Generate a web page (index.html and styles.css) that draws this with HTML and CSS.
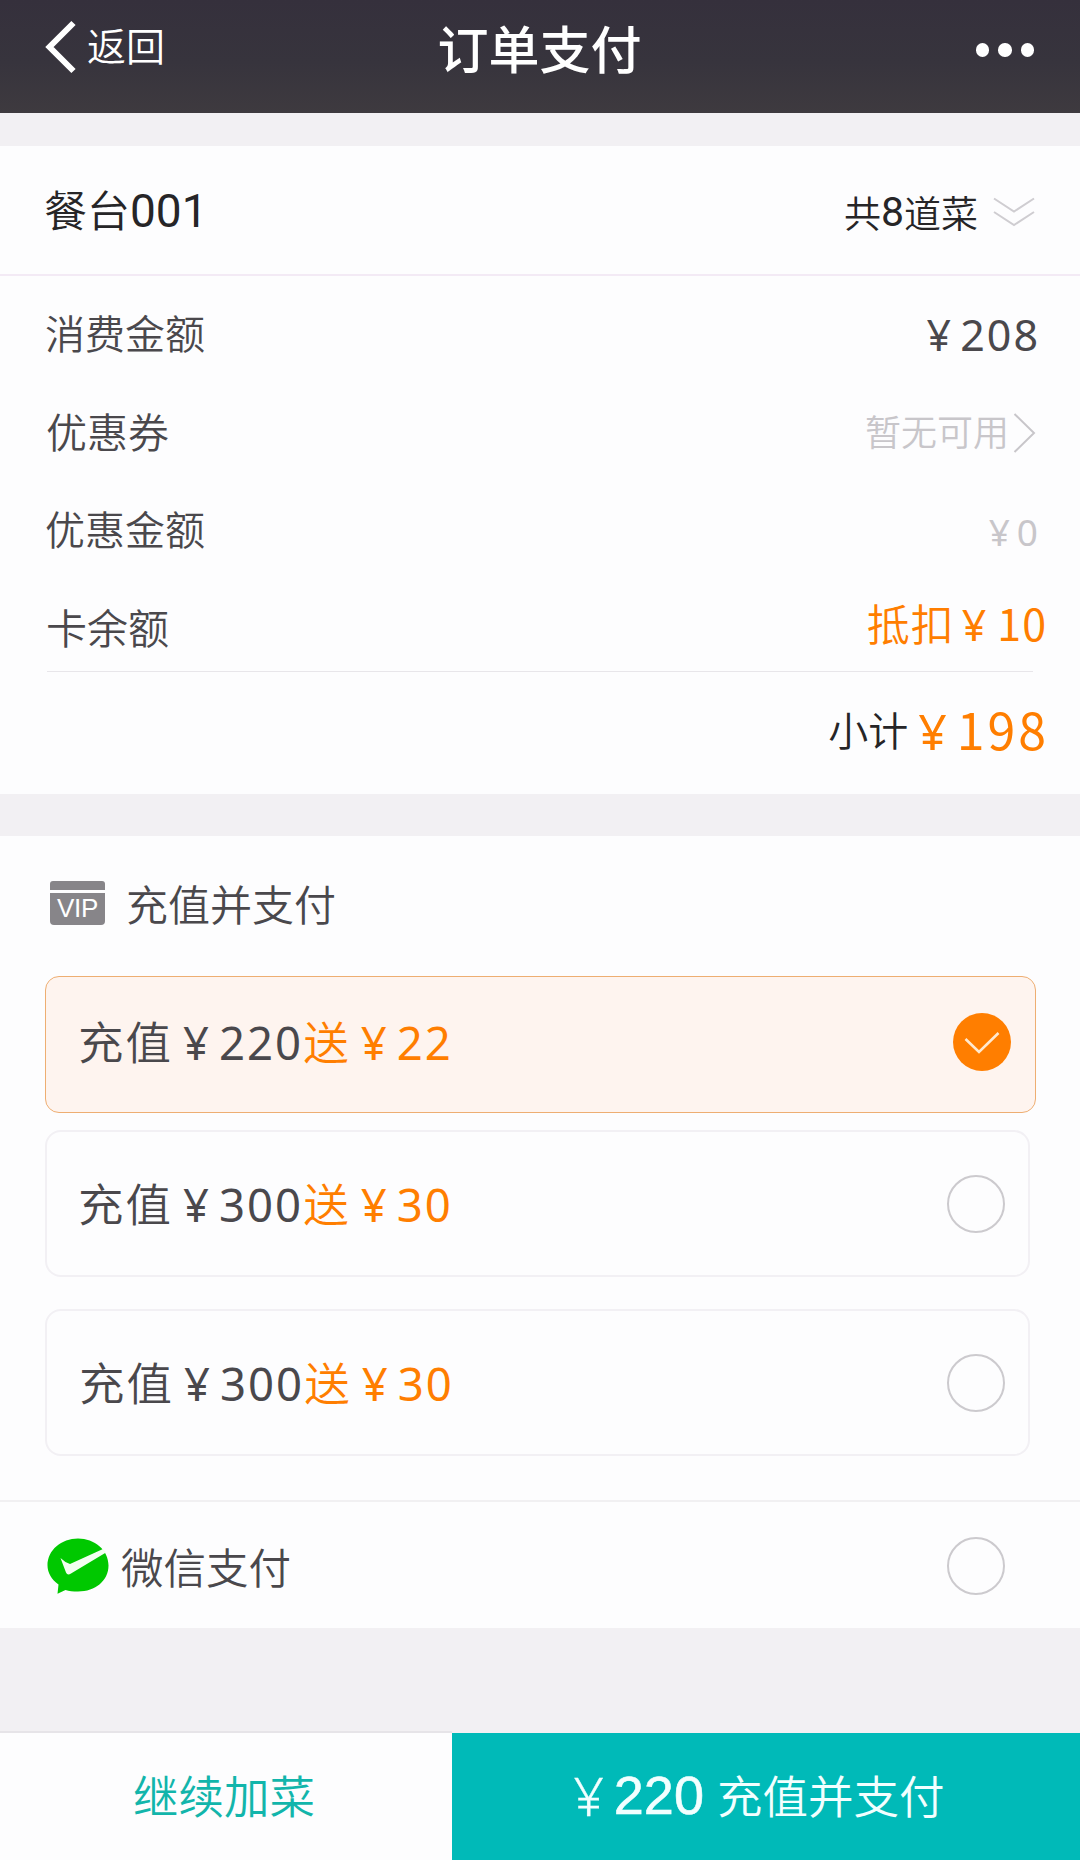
FILE: index.html
```html
<!DOCTYPE html>
<html lang="zh-CN">
<head>
<meta charset="UTF-8">
<meta name="viewport" content="width=device-width, initial-scale=1.0">
<title>订单支付</title>
<link rel="stylesheet" href="styles.css">
</head>
<body>

<header class="header">
    <a class="back">
        <svg class="back-icon" width="32" height="54" viewBox="0 0 32 54"><path d="M28.5 3 L4.5 27 L28.5 51" fill="none" stroke="#fff" stroke-width="6"/></svg>
        <span>返回</span>
    </a>
    <h1 class="title">订单支付</h1>
    <div class="more"><i></i><i></i><i></i></div>
</header>

<section class="order">
    <div class="table-row">
        <span class="table-name">餐台<b>001</b></span>
        <span class="dishes">共<b>8</b>道菜
            <svg class="down-icon" width="42" height="30" viewBox="0 0 42 30"><path d="M1 1.5 L21 14.5 L41 1.5 M1 15 L21 28 L41 15" fill="none" stroke="#cfcdd1" stroke-width="2"/></svg>
        </span>
    </div>
    <div class="details">
        <div class="row"><span>消费金额</span><span class="price"><i class="yen">¥</i><b>208</b></span></div>
        <div class="row"><span class="label-wide">优惠券</span><span class="coupon">暂无可用<svg class="right-icon" width="23" height="40" viewBox="0 0 23 40"><path d="M1.5 1 L21 20 L1.5 39" fill="none" stroke="#c8c6ca" stroke-width="2"/></svg></span></div>
        <div class="row"><span>优惠金额</span><span class="discount"><i class="yen">¥</i>0</span></div>
        <div class="row row-last"><span class="label-wide">卡余额</span><span class="deduct">抵扣<i class="yen">¥</i><b>10</b></span></div>
    </div>
    <div class="subtotal"><span>小计</span><span class="total"><i class="yen">¥</i><b>198</b></span></div>
</section>

<section class="payment">
    <div class="recharge-title">
        <div class="vip-icon"><div class="vip-stripe"></div><div class="vip-body">VIP</div></div>
        <span>充值并支付</span>
    </div>
    <div class="option option-selected">
        <span>充值<i class="yen">¥</i><b>220</b><em>送<i class="yen">¥</i><b>22</b></em></span>
        <svg class="checked" width="58" height="58" viewBox="0 0 58 58"><circle cx="29" cy="29" r="29" fill="#ff7e00"/><path d="M12.5 26 L26 39 L45.5 20" fill="none" stroke="#ffe9cf" stroke-width="2.6"/></svg>
    </div>
    <div class="option">
        <span>充值<i class="yen">¥</i><b>300</b><em>送<i class="yen">¥</i><b>30</b></em></span>
        <div class="radio"></div>
    </div>
    <div class="option option-third">
        <span>充值<i class="yen">¥</i><b>300</b><em>送<i class="yen">¥</i><b>30</b></em></span>
        <div class="radio"></div>
    </div>
    <div class="wechat">
        <svg class="wechat-icon" width="62" height="56" viewBox="0 0 62 56">
            <path d="M31 .5 C47.500 .5 61.500 12 61.500 27.500 C61.500 42.500 48.500 53.500 31 53.500 C26 53.500 22 53 18.500 52 L10.500 55.800 L11.500 46.500 C4.500 41.500 .5 34.500 .5 27.500 C.5 12 14.500 .5 31 .5 Z" fill="#00c800"/>
            <path d="M13.500 20 Q18 24.500 23 26 L56 11 L59 14.500 L24 35.500 Q20.500 38 19 34.500 Z" fill="#f2fff0"/>
        </svg>
        <span>微信支付</span>
        <div class="radio"></div>
    </div>
</section>

<footer class="footer">
    <a class="add-more">继续加菜</a>
    <a class="pay"><i>¥</i><b>220</b><span>充值并支付</span></a>
</footer>

</body>
</html>
```
FILE: styles.css
```css
* {
    box-sizing: border-box;
}
body {
    margin: 0;
    height: 1860px;
    display: flex;
    flex-direction: column;
    background-color: #f2f0f3;
    color: #4a484c;
    font-family: "Noto Sans CJK SC", sans-serif;
    font-weight: 350;
    line-height: 1;
    white-space: nowrap;
}
i, em {
    font-style: normal;
}
b {
    font-weight: 400;
}
svg {
    display: block;
    flex: none;
}

/* header */
.header {
    display: grid;
    grid-template-columns: 1fr auto 1fr;
    height: 113px;
    padding: 0 46px 0 45px;
    background: linear-gradient(#35303c, #37343d 55%, #3e3a3f);
    color: #fff;
}
.back {
    display: flex;
    align-items: center;
    height: 94px;
    font-size: 39px;
}
.back span {
    margin: -5px 0 0 10px;
}
.title {
    margin: 0;
    font-size: 51px;
    font-weight: 500;
    line-height: 94px;
}
.more {
    display: flex;
    justify-content: flex-end;
    align-items: center;
    gap: 9px;
    height: 100px;
}
.more i {
    width: 13.500px;
    height: 13.500px;
    border-radius: 50%;
    background-color: #fff;
}

/* order */
.order {
    height: 648px;
    margin-top: 33px;
    background-color: #fdfdfe;
}
.table-row {
    display: flex;
    justify-content: space-between;
    align-items: center;
    height: 130px;
    padding: 0 45px 0 44px;
    border-bottom: 2px solid #f3eaf5;
    color: #262527;
}
.table-row b {
    font-family: Roboto, sans-serif;
}
.table-name {
    font-size: 43px;
}
.table-name b {
    font-size: 46px;
}
.dishes {
    display: flex;
    align-items: center;
    padding-top: 4px;
    font-size: 37px;
}
.dishes b {
    font-size: 41px;
}
.down-icon {
    margin-left: 15px;
}
.details {
    margin: 0 47px 0 47px;
    padding-top: 7px;
    border-bottom: 1px solid #e8e6ea;
}
.row {
    display: flex;
    justify-content: space-between;
    align-items: center;
    height: 98px;
    font-size: 40px;
}
.row span:first-child {
    margin-left: -2px;
}
.row .label-wide:first-child {
    margin-left: -1px;
    font-size: 41px;
}
.row-last {
    height: 94px;
    padding-top: 4px;
}
.yen {
    margin-right: 7px;
    font-family: "Noto Sans", sans-serif;
    font-weight: 400;
}
.price {
    margin-right: -7px;
    padding-top: 3px;
    font-size: 43px;
    letter-spacing: 2px;
}
.price b, .discount, .option b {
    font-family: "Noto Sans", sans-serif;
    font-weight: 400;
}
.coupon {
    display: flex;
    align-items: center;
    margin-right: -3px;
    font-size: 36px;
    color: #c8c6ca;
}
.right-icon {
    margin: 5px 0 0 4px;
}
.discount {
    margin-right: -5px;
    padding-top: 6px;
    font-size: 37px;
    color: #c8c6ca;
}
.discount .yen {
    margin-right: 7px;
}
.deduct {
    margin: -5px -14px 0 0;
    font-size: 43px;
    letter-spacing: 1px;
    color: #ff7e00;
}
.deduct .yen {
    margin: 0 10px 0 7px;
}
.subtotal {
    display: flex;
    justify-content: flex-end;
    align-items: center;
    height: 122px;
    padding: 0 31px 8px 0;
    font-size: 40px;
    color: #262527;
}
.total {
    margin-left: 10px;
    font-size: 50px;
    letter-spacing: 3px;
    color: #ff7e00;
}
.total .yen {
    margin-right: 10px;
    letter-spacing: 0;
}

/* payment */
.payment {
    height: 792px;
    margin-top: 42px;
    background-color: #fdfdfe;
}
.recharge-title {
    display: flex;
    align-items: center;
    height: 140px;
    padding-left: 50px;
    font-size: 42px;
}
.recharge-title span {
    margin: -7px 0 0 21px;
}
.vip-icon {
    width: 55px;
    margin-top: -6px;
}
.vip-stripe {
    height: 9px;
    margin-bottom: 3px;
    border-radius: 3px 3px 0 0;
    background-color: #878589;
}
.vip-body {
    height: 32px;
    border-radius: 0 0 4px 4px;
    background-color: #878589;
    color: #fff;
    font: 26px/30px "Liberation Sans", sans-serif;
    letter-spacing: -.3px;
    text-align: center;
}
.option {
    display: flex;
    justify-content: space-between;
    align-items: center;
    width: 985px;
    height: 147px;
    margin-left: 45px;
    padding: 0 23px 0 31px;
    border: 2px solid #f2f0f4;
    border-radius: 16px;
    font-size: 45.500px;
    letter-spacing: 2px;
}
.option em {
    color: #ff7e00;
}
.option .yen {
    margin: 0 9px 0 10px;
    letter-spacing: 1px;
}
.option-selected {
    width: 991px;
    height: 137px;
    margin-bottom: 17px;
    padding: 0 24px 5px 32px;
    border: 1.500px solid #eeae72;
    border-radius: 14px;
    background-color: #fef4ef;
}
.option-third {
    margin-top: 32px;
    padding-left: 32px;
}
.radio {
    width: 58px;
    height: 58px;
    border: 2px solid #cccace;
    border-radius: 50%;
}
.wechat {
    display: flex;
    align-items: center;
    height: 130px;
    margin-top: 44px;
    padding: 0 75px 0 47px;
    border-top: 2px solid #f1f0f2;
    font-size: 42.500px;
}
.wechat span {
    margin-left: 12px;
}
.wechat .radio {
    margin-left: auto;
}

/* footer */
.footer {
    display: flex;
    height: 129px;
    margin-top: auto;
}
.add-more {
    width: 452px;
    padding-right: 4px;
    border-top: 2px solid #e6e4e8;
    background-color: #fdfdfe;
    color: #12b5ab;
    font-size: 45.500px;
    line-height: 122px;
    text-align: center;
}
.pay {
    display: flex;
    flex: 1;
    justify-content: center;
    align-items: center;
    margin-top: 2px;
    padding: 0 14px 3px 0;
    background-color: #00bab8;
    color: #f2ffff;
    font-size: 45.500px;
}
.pay i {
    font-family: "Noto Sans", sans-serif;
    font-size: 53px;
    font-weight: 350;
    -webkit-text-stroke: .4px #f2ffff;
}
.pay b {
    margin: 0 13px 0 10px;
    font: 400 54px "Liberation Sans", sans-serif;
    -webkit-text-stroke: .6px #f2ffff;
}
```
